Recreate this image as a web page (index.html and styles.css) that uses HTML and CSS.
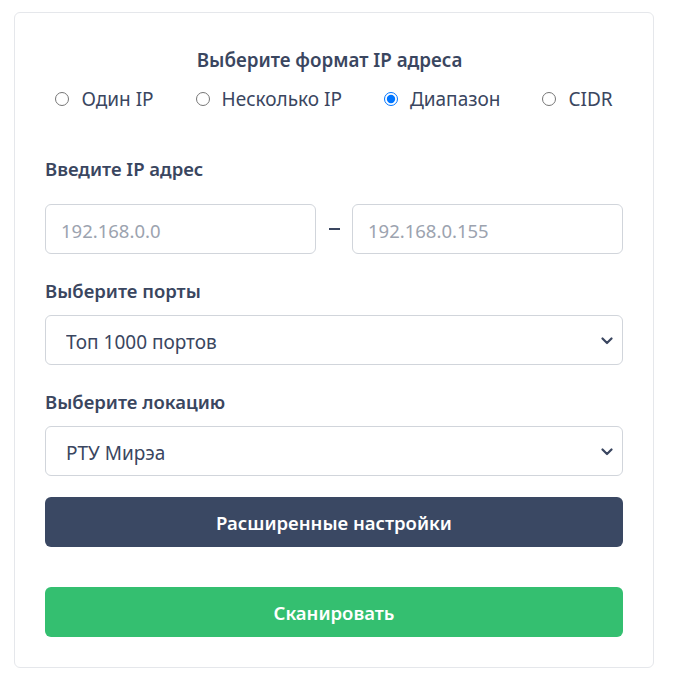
FILE: index.html
```html
<!DOCTYPE html>
<html lang="ru">
<head>
<meta charset="utf-8">
<link rel="stylesheet" href="styles.css">
</head>
<body>
<div class="page">
  <form class="card">
    <div class="title">Выберите формат IP адреса</div>
    <div class="radios">
      <label class="radio"><input type="radio" name="fmt"> Один IP</label>
      <label class="radio"><input type="radio" name="fmt"> Несколько IP</label>
      <label class="radio"><input type="radio" name="fmt" checked> Диапазон</label>
      <label class="radio"><input type="radio" name="fmt"> CIDR</label>
    </div>

    <div class="label label-ip">Введите IP адрес</div>
    <div class="range">
      <input class="field" type="text" placeholder="192.168.0.0">
      <span class="dash-box"><span class="dash"></span></span>
      <input class="field" type="text" placeholder="192.168.0.155">
    </div>

    <div class="label">Выберите порты</div>
    <div class="select-wrap">
      <select class="select">
        <option>Топ 1000 портов</option>
      </select>
      <svg class="chev" width="12" height="8" viewBox="0 0 12 8"><path d="M1.5 1.5 L6 6 L10.5 1.5" fill="none" stroke="#3a4660" stroke-width="2.2" stroke-linecap="round" stroke-linejoin="round"/></svg>
    </div>

    <div class="label">Выберите локацию</div>
    <div class="select-wrap">
      <select class="select">
        <option>РТУ Мирэа</option>
      </select>
      <svg class="chev" width="12" height="8" viewBox="0 0 12 8"><path d="M1.5 1.5 L6 6 L10.5 1.5" fill="none" stroke="#3a4660" stroke-width="2.2" stroke-linecap="round" stroke-linejoin="round"/></svg>
    </div>

    <button type="button" class="btn btn-dark">Расширенные настройки</button>
    <button type="button" class="btn btn-green">Сканировать</button>
  </form>
</div>
</body>
</html>
```
FILE: styles.css
```css
* { box-sizing: border-box; }
html, body { margin: 0; background: #fff; }
body {
  font-family: "Noto Sans", "Open Sans", sans-serif;
  color: #3a4660;
}
.page {
  padding: 12px 20px 12px 14px;
}
.card {
  width: 640px;
  border: 1px solid #e5e7eb;
  border-radius: 6px;
  padding: 34px 30px 30px 30px;
  display: flex;
  flex-direction: column;
}
.title {
  text-align: center;
  font-weight: 600;
  font-size: 18.8px;
  line-height: 27px;
  padding-right: 9px;
}
.radios {
  margin-top: 12px;
  display: flex;
  justify-content: center;
  gap: 42px;
  font-size: 19px;
  line-height: 26px;
}
.radio {
  display: flex;
  align-items: center;
  gap: 12px;
}
.radio input {
  margin: 0 0 1px 0;
  width: 14px;
  height: 14px;
}
.label {
  font-weight: 600;
  font-size: 18.5px;
  line-height: 26px;
  margin-top: 24px;
  margin-bottom: 11px;
}
.label-ip {
  margin-top: 44px;
  margin-bottom: 22px;
}
.range {
  display: flex;
  align-items: center;
}
.field {
  flex: 1 1 0;
  width: 0;
  min-width: 0;
  height: 50px;
  border: 1px solid #d1d5db;
  border-radius: 6px;
  padding: 2px 15px 0;
  font-family: inherit;
  font-size: 18.5px;
  color: #3a4660;
  outline: none;
}
.field::placeholder { color: #9ca3af; }
.dash-box {
  width: 36px;
  flex: none;
  display: flex;
  justify-content: center;
}
.dash {
  display: block;
  width: 11px;
  height: 2px;
  background: #3a4660;
}
.select-wrap {
  position: relative;
}
.select {
  width: 100%;
  height: 50px;
  appearance: none;
  -webkit-appearance: none;
  background: #fff;
  border: 1px solid #d1d5db;
  border-radius: 6px;
  padding: 3px 20px 0;
  font-family: inherit;
  font-size: 19px;
  color: #3a4660;
}
.chev {
  position: absolute;
  right: 10px;
  top: 22px;
  pointer-events: none;
}
.btn {
  height: 50px;
  border: none;
  border-radius: 6px;
  color: #fff;
  padding-top: 1px;
  font-family: inherit;
  font-weight: 600;
  font-size: 18.5px;
}
.btn-dark {
  margin-top: 21px;
  background: #3a4863;
}
.btn-green {
  margin-top: 40px;
  background: #34bf70;
}
```
